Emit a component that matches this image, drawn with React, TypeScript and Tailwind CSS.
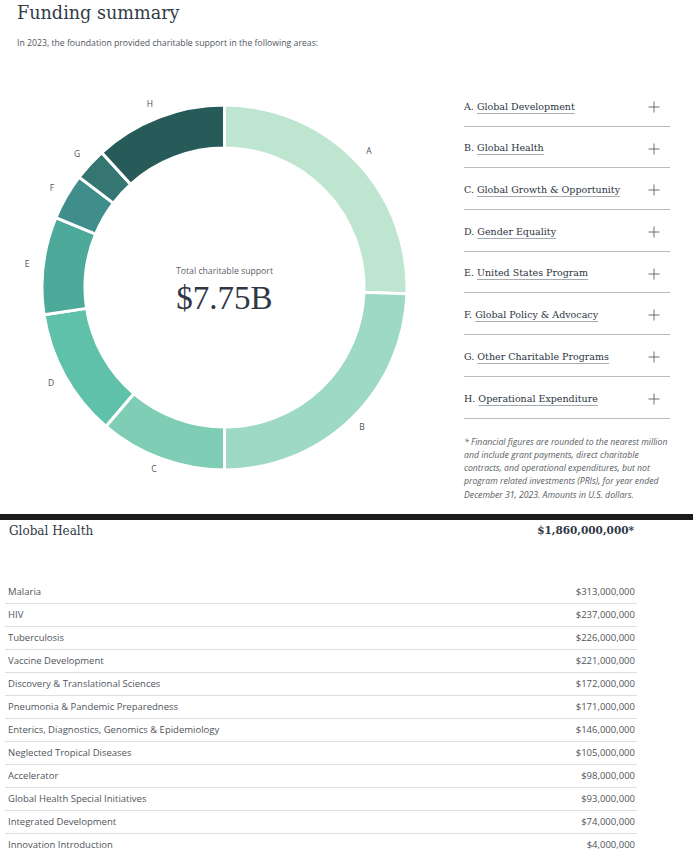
import React from 'react';

const segments = [
  { key: 'A', start: 0, end: 92, color: '#bde5d0' },
  { key: 'B', start: 92, end: 180, color: '#9dd9c4' },
  { key: 'C', start: 180, end: 220.5, color: '#80cdb5' },
  { key: 'D', start: 220.5, end: 261.4, color: '#5fc1a9' },
  { key: 'E', start: 261.4, end: 292.5, color: '#4daa9a' },
  { key: 'F', start: 292.5, end: 307.2, color: '#3f8e8c' },
  { key: 'G', start: 307.2, end: 317.7, color: '#357572' },
  { key: 'H', start: 317.7, end: 360, color: '#275b59' },
];

const labels = [
  { key: 'H', x: 150, y: 103 },
  { key: 'A', x: 369, y: 150 },
  { key: 'B', x: 362, y: 426 },
  { key: 'C', x: 154, y: 468 },
  { key: 'D', x: 51, y: 382 },
  { key: 'E', x: 27, y: 263 },
  { key: 'F', x: 52, y: 187 },
  { key: 'G', x: 77, y: 153 },
];

const areas = [
  { letter: 'A.', name: 'Global Development' },
  { letter: 'B.', name: 'Global Health' },
  { letter: 'C.', name: 'Global Growth & Opportunity' },
  { letter: 'D.', name: 'Gender Equality' },
  { letter: 'E.', name: 'United States Program' },
  { letter: 'F.', name: 'Global Policy & Advocacy' },
  { letter: 'G.', name: 'Other Charitable Programs' },
  { letter: 'H.', name: 'Operational Expenditure' },
];

const health = [
  ['Malaria', '$313,000,000'],
  ['HIV', '$237,000,000'],
  ['Tuberculosis', '$226,000,000'],
  ['Vaccine Development', '$221,000,000'],
  ['Discovery & Translational Sciences', '$172,000,000'],
  ['Pneumonia & Pandemic Preparedness', '$171,000,000'],
  ['Enterics, Diagnostics, Genomics & Epidemiology', '$146,000,000'],
  ['Neglected Tropical Diseases', '$105,000,000'],
  ['Accelerator', '$98,000,000'],
  ['Global Health Special Initiatives', '$93,000,000'],
  ['Integrated Development', '$74,000,000'],
  ['Innovation Introduction', '$4,000,000'],
];

// chart origin sits at page y=85
const OFFSET = 85;
const CX = 224.5;
const CY = 287.5 - OFFSET;
const R = 182.5;
const r = 139.5;

const pt = (deg: number, rad: number) => {
  const a = (deg * Math.PI) / 180;
  return [CX + rad * Math.sin(a), CY - rad * Math.cos(a)];
};

const arcPath = (start: number, end: number) => {
  const large = end - start > 180 ? 1 : 0;
  const [x1, y1] = pt(start, R);
  const [x2, y2] = pt(end, R);
  const [x3, y3] = pt(end, r);
  const [x4, y4] = pt(start, r);
  return `M${x1} ${y1} A${R} ${R} 0 ${large} 1 ${x2} ${y2} L${x3} ${y3} A${r} ${r} 0 ${large} 0 ${x4} ${y4} Z`;
};

const PlusIcon = () => (
  <svg width="12" height="12" viewBox="0 0 12 12" className="shrink-0">
    <path d="M6 0.5V11.5M0.5 6H11.5" stroke="#6b6f75" strokeWidth="1" />
  </svg>
);

const Donut = () => (
  <svg width="464" height="429" viewBox="0 0 464 429" className="shrink-0">
    {segments.map((s) => (
      <path key={s.key} d={arcPath(s.start, s.end)} fill={s.color} stroke="#ffffff" strokeWidth="3" strokeLinejoin="miter" />
    ))}
    {labels.map((l) => (
      <text
        key={l.key}
        x={l.x}
        y={l.y - OFFSET}
        textAnchor="middle"
        dominantBaseline="central"
        fontSize="8.5"
        fill="#4f545a"
        fontFamily="'Open Sans', 'Noto Sans', sans-serif"
      >
        {l.key}
      </text>
    ))}
    <text
      x={CX}
      y={271 - OFFSET}
      textAnchor="middle"
      dominantBaseline="central"
      fontSize="8.7"
      fill="#5b6068"
      fontFamily="'Open Sans', 'Noto Sans', sans-serif"
    >
      Total charitable support
    </text>
    <text
      x={CX}
      y={298 - OFFSET}
      textAnchor="middle"
      dominantBaseline="central"
      fontSize="33"
      fill="#2f3844"
      fontFamily="'Liberation Serif', serif"
    >
      $7.75B
    </text>
  </svg>
);

export default function App() {
  return (
    <div className="w-[693px] bg-white font-['Open_Sans','Noto_Sans',sans-serif]">
      <div className="px-[17px]">
        <h1 className="font-['DejaVu_Serif',serif] text-[17.6px] leading-[26px] text-[#333b47]">Funding summary</h1>
        <p className="mt-[10px] text-[8.7px] leading-[14px] text-[#4f555c]">
          In 2023, the foundation provided charitable support in the following areas:
        </p>
      </div>

      <div className="mt-[35px] flex">
        <Donut />
        <div className="w-[206px]">
          <ul>
            {areas.map((a) => (
              <li key={a.letter} className="flex h-[41.7px] items-center justify-between border-b border-[#b8bcc0] pt-[3px] pr-[10px]">
                <span className="font-['DejaVu_Serif',serif] text-[9.5px] text-[#2b3441]">
                  {a.letter}{' '}
                  <span className="underline decoration-[#a6abb0] underline-offset-[3px]">{a.name}</span>
                </span>
                <PlusIcon />
              </li>
            ))}
          </ul>
          <p className="mt-[17px] whitespace-nowrap text-[8.7px] italic leading-[13.3px] text-[#585d63]">
            * Financial figures are rounded to the nearest million
            <br />
            and include grant payments, direct charitable
            <br />
            contracts, and operational expenditures, but not
            <br />
            program related investments (PRIs), for year ended
            <br />
            December 31, 2023. Amounts in U.S. dollars.
          </p>
        </div>
      </div>

      <div className="h-[6px] bg-[#1b1b1b]" />

      <div className="flex h-[22px] w-[636px] items-center justify-between pl-[9px] pr-[2px] text-[#2f3846]">
        <span className="font-['DejaVu_Serif',serif] text-[12px]">Global Health</span>
        <span className="font-['DejaVu_Serif',serif] text-[10.5px] font-bold">$1,860,000,000*</span>
      </div>

      <div className="ml-[5px] mt-[39px] w-[632px]">
        {health.map(([name, amount], i) => (
          <div
            key={name}
            className={`flex h-[23px] items-center justify-between pl-[3px] pr-[2px] text-[9.5px] text-[#50555b] ${
              i < health.length - 1 ? 'border-b border-[#dcdee0]' : ''
            }`}
          >
            <span>{name}</span>
            <span>{amount}</span>
          </div>
        ))}
      </div>
    </div>
  );
}
